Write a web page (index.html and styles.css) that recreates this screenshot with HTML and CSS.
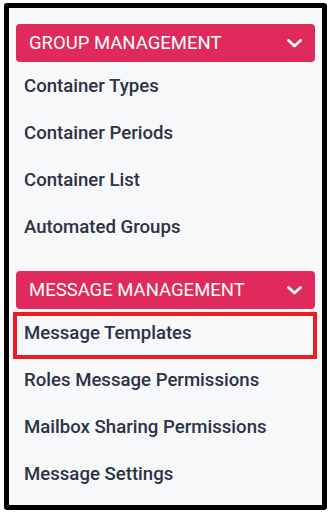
FILE: index.html
```html
<!DOCTYPE html>
<html lang="en">
<head>
<meta charset="utf-8">
<title>Menu</title>
<link rel="stylesheet" href="styles.css">
</head>
<body>
<div class="panel">
  <section class="group">
    <div class="group-header">
      <span class="group-title">GROUP MANAGEMENT</span>
      <svg class="chevron" width="15" height="9" viewBox="0 0 15 9"><polyline points="1.5,1.5 7.5,7 13.5,1.5" fill="none" stroke="#fff" stroke-width="2.8" stroke-linecap="round" stroke-linejoin="round"/></svg>
    </div>
    <ul class="items">
      <li class="item">Container Types</li>
      <li class="item">Container Periods</li>
      <li class="item">Container List</li>
      <li class="item">Automated Groups</li>
    </ul>
  </section>
  <section class="group">
    <div class="group-header">
      <span class="group-title">MESSAGE MANAGEMENT</span>
      <svg class="chevron" width="15" height="9" viewBox="0 0 15 9"><polyline points="1.5,1.5 7.5,7 13.5,1.5" fill="none" stroke="#fff" stroke-width="2.8" stroke-linecap="round" stroke-linejoin="round"/></svg>
    </div>
    <ul class="items">
      <li class="item highlighted">Message Templates<span class="highlight-box"></span></li>
      <li class="item">Roles Message Permissions</li>
      <li class="item">Mailbox Sharing Permissions</li>
      <li class="item">Message Settings</li>
    </ul>
  </section>
</div>
</body>
</html>
```

FILE: styles.css
```css
html, body {
  margin: 0;
  padding: 0;
  background: #ffffff;
}

body {
  font-family: Roboto, "Liberation Sans", sans-serif;
}

.panel {
  box-sizing: border-box;
  width: 323px;
  height: 507px;
  margin: 3px 0 0 4px;
  border: 5px solid #000;
  border-radius: 3px;
  background: #f7f8fa;
  padding: 16px 7px 8px 7px;
  display: flex;
  flex-direction: column;
  gap: 21px;
}

.group {
  display: flex;
  flex-direction: column;
}

.group-header {
  height: 38px;
  background: #df2a5b;
  border-radius: 4px;
  display: flex;
  align-items: center;
  justify-content: space-between;
  padding: 0 13px 0 13px;
  color: #fff;
}

.group-title {
  font-size: 18.5px;
  font-weight: 400;
  letter-spacing: 0;
}

.chevron {
  display: block;
  margin-top: 1px;
}

.items {
  list-style: none;
  margin: 0;
  padding: 0;
}

.item {
  height: 47px;
  display: flex;
  align-items: center;
  padding-left: 8px;
  font-size: 18.6px;
  font-weight: 500;
  color: #2b3344;
}

.highlighted {
  position: relative;
}

.highlight-box {
  position: absolute;
  top: 3px;
  left: -3px;
  right: -2px;
  bottom: -3px;
  border: 4px solid #ec1c24;
}
```
